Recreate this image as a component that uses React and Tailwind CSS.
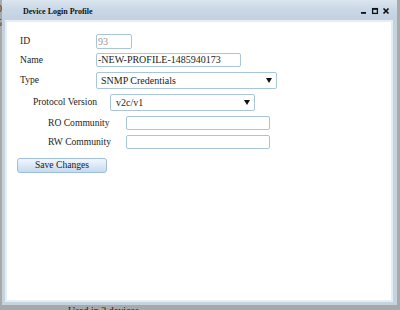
export default function App() {
  const inputBase =
    "h-full border border-[#a9c5de] rounded-[2px] bg-white text-[10px] leading-none flex items-center overflow-hidden whitespace-nowrap";
  const Arrow = () => (
    <svg width="6" height="5" viewBox="0 0 6 5" className="shrink-0">
      <path d="M0 0 L6 0 L3 5 Z" fill="#111" />
    </svg>
  );
  return (
    <div className="w-[400px] h-[310px] bg-[#a9a9a9] overflow-hidden relative font-['Liberation_Serif','Times_New_Roman',serif] text-[#1c1c1c]">
      <div className="absolute left-[-5px] top-[2px] w-[7px] overflow-hidden text-[10px] leading-[14px] text-[#3a3a3a] text-right">
        <div>0</div>
        <div>5</div>
      </div>
      <div className="absolute left-[68px] top-[305px] text-[10px] leading-[12px] text-[#222]">Used in 2 devices</div>

      <div className="absolute left-[2px] top-0 w-[395px] h-[305px] bg-[#c3d4e0] flex flex-col">
        <div className="h-[20px] shrink-0 flex items-center justify-between pl-[21px] pr-[7px] pt-[3px] bg-gradient-to-b from-[#dbe5ef] via-[#c9d7e6] to-[#c2d2e3]">
          <span className="text-[8px] font-bold leading-none text-[#111]">Device Login Profile</span>
          <svg width="30" height="8" viewBox="0 0 30 8" className="mt-[-1px]">
            <rect x="1" y="5" width="5" height="1.8" fill="#111" />
            <rect x="12.6" y="1.6" width="4.8" height="4.8" fill="none" stroke="#111" strokeWidth="1.3" />
            <rect x="12" y="1" width="6" height="1.8" fill="#111" />
            <path d="M23.5 1.5 L28.5 6.5 M28.5 1.5 L23.5 6.5" stroke="#111" strokeWidth="1.7" />
          </svg>
        </div>
        <div className="flex-1 ml-[3px] mr-[4px] mb-[3px] border-2 border-[#e7edf1] bg-white flex flex-col pt-[12px] pl-[13px] text-[9.6px]">
          <div className="h-[15px] flex items-center">
            <span className="w-[76px]">ID</span>
            <div className={inputBase + " w-[36px] bg-[#ececec] text-[#9a9a9a] pl-[1px]"}>93</div>
          </div>
          <div className="h-[14px] mt-[4px] flex items-center">
            <span className="w-[76px]">Name</span>
            <div className={inputBase + " w-[145px] pl-[1px]"}>-NEW-PROFILE-1485940173</div>
          </div>
          <div className="h-[17px] mt-[5px] flex items-center">
            <span className="w-[76px]">Type</span>
            <div className={inputBase + " w-[181px] pl-[4px] pr-[4px] justify-between text-[9.6px]"}>
              <span>SNMP Credentials</span>
              <Arrow />
            </div>
          </div>
          <div className="h-[17px] mt-[5px] pl-[13px] flex items-center">
            <span className="w-[77px]">Protocol Version</span>
            <div className={inputBase + " w-[145px] pl-[5px] pr-[4px] justify-between text-[9.6px]"}>
              <span>v2c/v1</span>
              <Arrow />
            </div>
          </div>
          <div className="h-[14px] mt-[5px] pl-[28px] flex items-center">
            <span className="w-[78px]">RO Community</span>
            <div className={inputBase + " w-[144px]"}></div>
          </div>
          <div className="h-[14px] mt-[5px] pl-[28px] flex items-center">
            <span className="w-[78px]">RW Community</span>
            <div className={inputBase + " w-[144px]"}></div>
          </div>
          <div className="mt-[9px] ml-[-3px] w-[90px] h-[15px] border border-[#9fbedb] rounded-[3px] bg-gradient-to-b from-[#f2f7fd] to-[#c6daef] flex items-center justify-center text-[9.6px] text-[#1a1a1a]">
            Save Changes
          </div>
        </div>
      </div>
    </div>
  );
}
